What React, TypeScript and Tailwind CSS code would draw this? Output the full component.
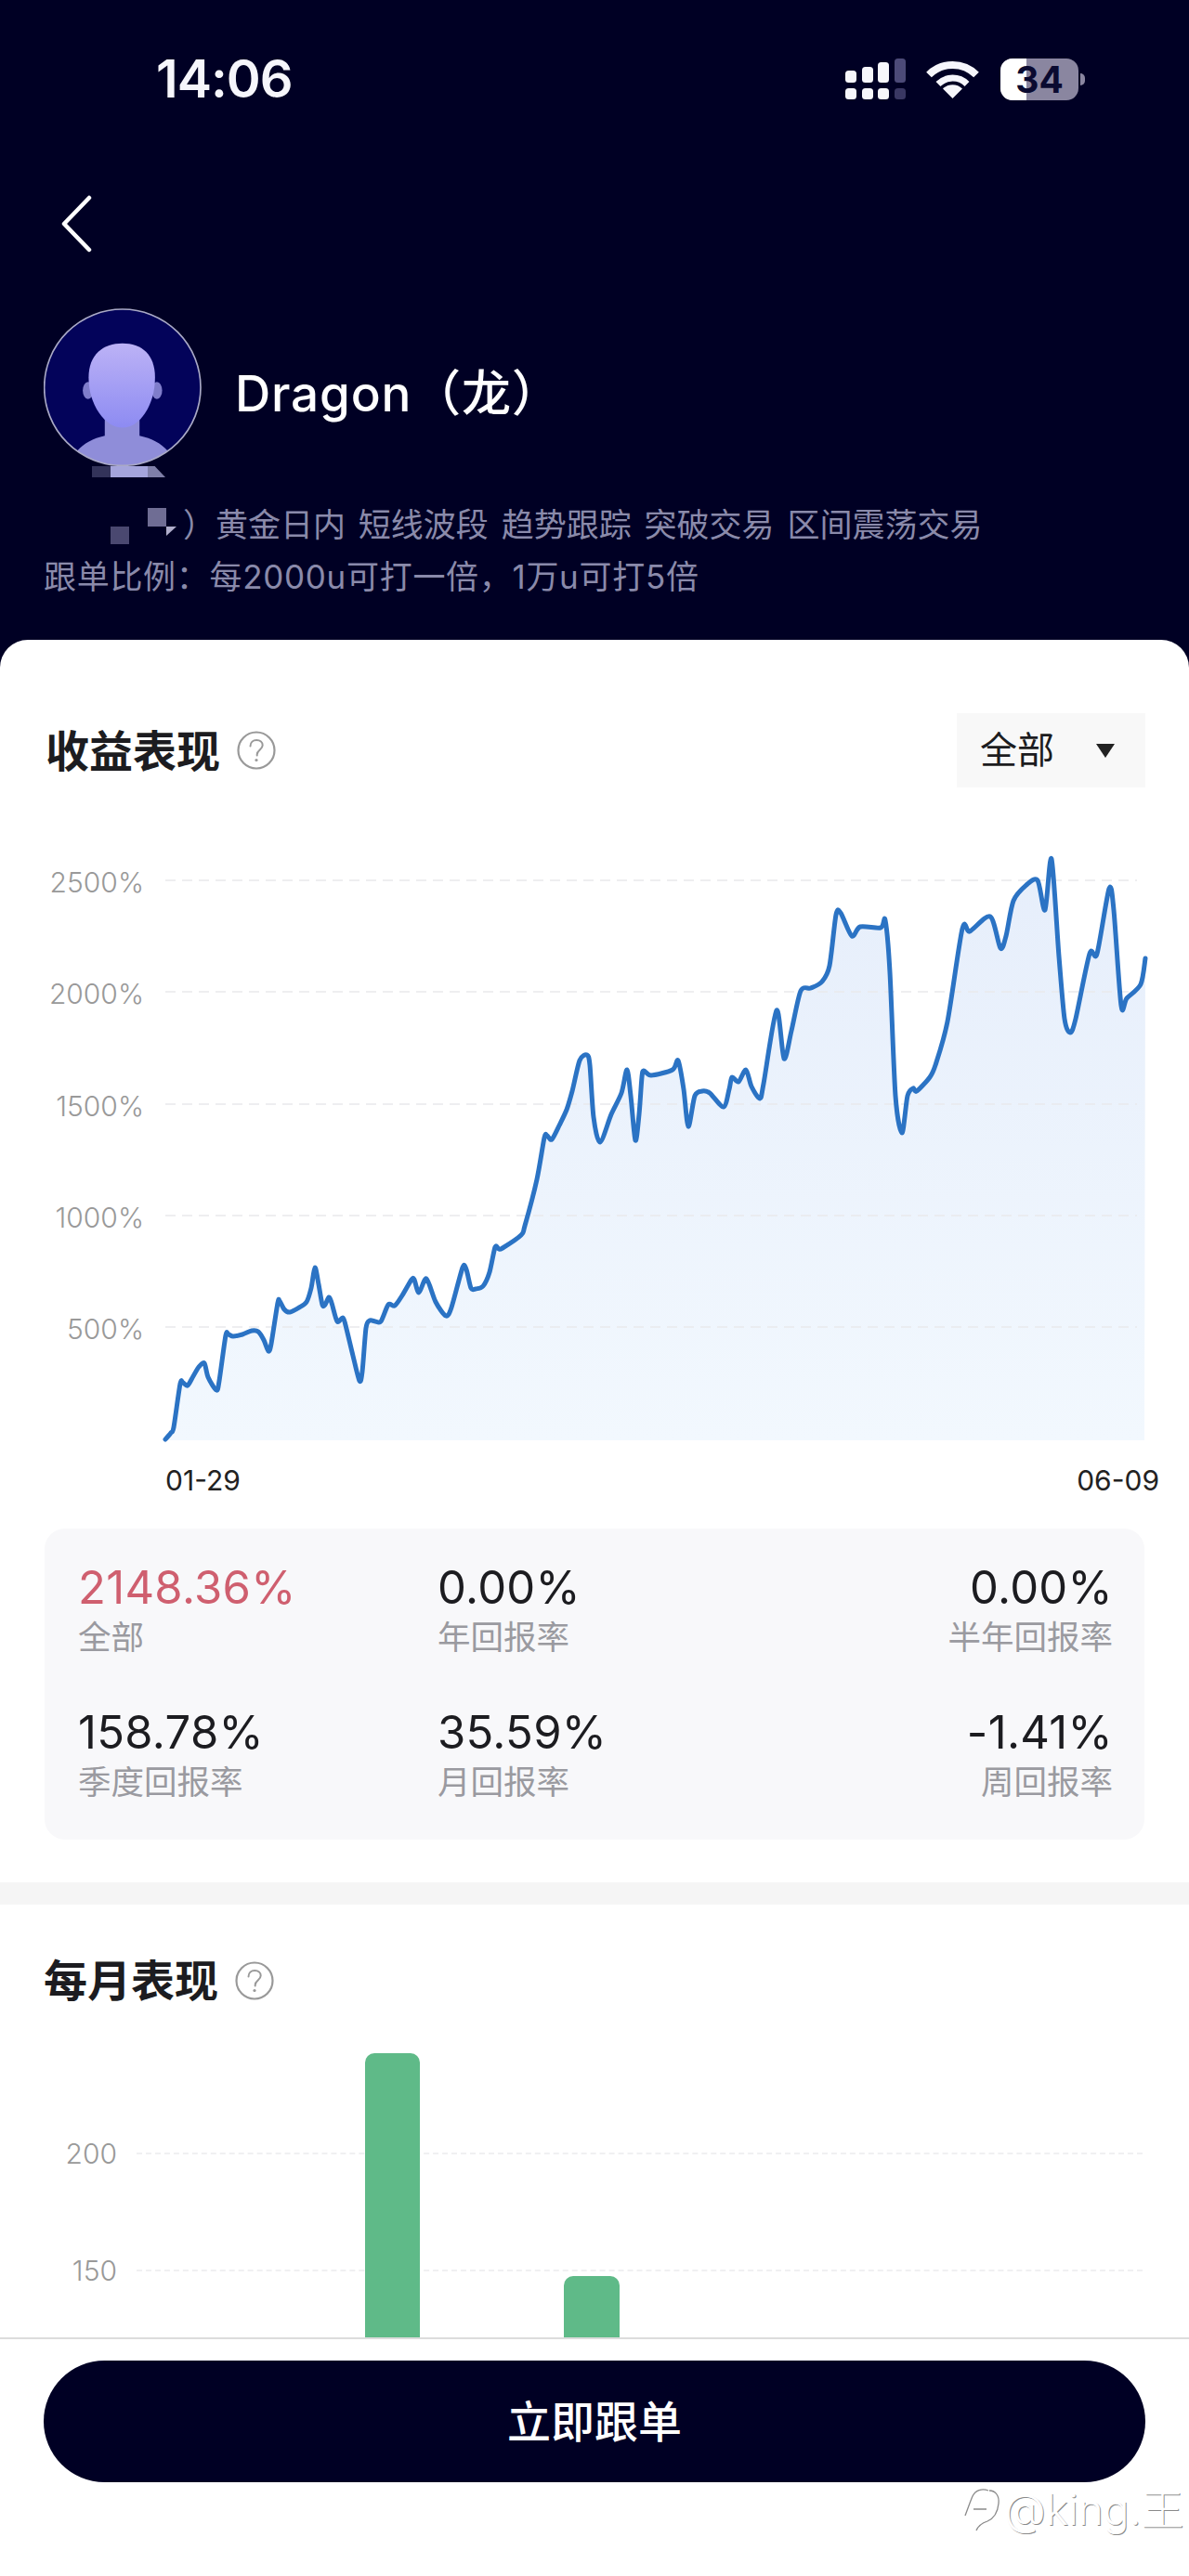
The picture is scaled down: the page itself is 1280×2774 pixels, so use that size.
import React from "react";

const SANS = "font-['Inter','Noto_Sans_CJK_SC',sans-serif]";

// plot box in page px: x 178..1232, y 930..1552
const PLOT = { x: 178, y: 930, w: 1054, h: 622 };
const GRID_Y = [948, 1068, 1189, 1309, 1429];

const CURVE: [number, number][] = [
  [178, 1550], [184, 1543], [187, 1537], [194, 1490], [197, 1489], [202, 1492], [208, 1482], [214, 1472],
  [220, 1468], [224, 1483], [233, 1497], [236, 1487], [243, 1438], [246, 1437], [251, 1439], [261, 1437],
  [271, 1433], [278, 1434], [284, 1443], [289, 1455], [292, 1447], [299, 1403], [301, 1401], [306, 1410],
  [312, 1413], [322, 1408], [330, 1402], [335, 1387], [339, 1365], [343, 1383], [347, 1405], [350, 1405],
  [354, 1397], [357, 1403], [363, 1423], [369, 1419], [372, 1427], [380, 1460], [387, 1487], [390, 1477],
  [394, 1430], [398, 1422], [404, 1423], [410, 1423], [418, 1405], [425, 1406], [433, 1395], [443, 1378],
  [446, 1378], [451, 1392], [459, 1377], [469, 1402], [480, 1417], [486, 1408], [498, 1365], [502, 1367],
  [507, 1387], [512, 1388], [520, 1385], [527, 1370], [533, 1343], [537, 1345], [541, 1344], [561, 1330],
  [565, 1320], [578, 1270], [586, 1225], [589, 1223], [594, 1227], [602, 1212], [610, 1195], [616, 1175],
  [624, 1142], [632, 1136], [635, 1147], [639, 1203], [646, 1230], [658, 1200], [669, 1177], [675, 1152],
  [679, 1180], [684, 1228], [688, 1200], [691, 1160], [693, 1153], [701, 1158], [724, 1152], [730, 1142],
  [736, 1173], [741, 1213], [748, 1180], [756, 1175], [764, 1177], [779, 1192], [785, 1173], [788, 1160],
  [795, 1165], [803, 1152], [809, 1170], [818, 1183], [822, 1167], [836, 1088], [844, 1140], [852, 1110],
  [862, 1067], [873, 1064], [885, 1057], [893, 1040], [900, 985], [905, 983], [917, 1008], [926, 998],
  [948, 999], [953, 991], [958, 1047], [964, 1180], [971, 1220], [977, 1180], [983, 1172], [987, 1175],
  [1001, 1160], [1007, 1147], [1020, 1100], [1036, 1000], [1044, 1003], [1066, 987], [1077, 1021], [1083, 1008],
  [1091, 970], [1105, 953], [1117, 948], [1125, 980], [1132, 925], [1140, 1030], [1146, 1097], [1152, 1112],
  [1158, 1097], [1173, 1027], [1181, 1027], [1194, 957], [1199, 980], [1207, 1083], [1213, 1075], [1228, 1060],
  [1233, 1032],
];

// catmull-rom through the traced points, so the peaks stay soft
function smoothPath(points: [number, number][]) {
  const tension = 0.14;
  let d = `M${points[0][0]} ${points[0][1]}`;
  for (let i = 0; i < points.length - 1; i++) {
    const p0 = points[Math.max(i - 1, 0)];
    const p1 = points[i];
    const p2 = points[i + 1];
    const p3 = points[Math.min(i + 2, points.length - 1)];
    const c1x = p1[0] + (p2[0] - p0[0]) * tension;
    const c1y = p1[1] + (p2[1] - p0[1]) * tension;
    const c2x = p2[0] - (p3[0] - p1[0]) * tension;
    const c2y = p2[1] - (p3[1] - p1[1]) * tension;
    d += ` C${c1x.toFixed(1)} ${c1y.toFixed(1)} ${c2x.toFixed(1)} ${c2y.toFixed(1)} ${p2[0]} ${p2[1]}`;
  }
  return d;
}

const STATS = [
  { value: "2148.36%", label: "全部", accent: true },
  { value: "0.00%", label: "年回报率" },
  { value: "0.00%", label: "半年回报率", right: true },
  { value: "158.78%", label: "季度回报率" },
  { value: "35.59%", label: "月回报率" },
  { value: "-1.41%", label: "周回报率", right: true },
];

function HelpIcon() {
  return (
    <svg width="42" height="42" viewBox="0 0 42 42" fill="none" className="shrink-0">
      <circle cx="21" cy="21" r="19.5" stroke="#999" strokeWidth="2.2" />
      <path
        d="M14.5 16.5c0-4 3-6.5 6.7-6.5 3.8 0 6.5 2.4 6.5 5.6 0 4.6-6 5.2-6 9.8v1"
        stroke="#999"
        strokeWidth="2"
        strokeLinecap="round"
      />
      <circle cx="21" cy="31.5" r="1.6" fill="#999" />
    </svg>
  );
}

function SignalIcon() {
  const bars = [
    { x: 0, top: 13, fill: "#f6f6fb" },
    { x: 18, top: 9, fill: "#f6f6fb" },
    { x: 35, top: 4, fill: "#f6f6fb" },
    { x: 53, top: 0, fill: "#4c4a78" },
  ];
  return (
    <svg width="65" height="45" viewBox="0 0 65 45">
      {bars.map((b) => (
        <g key={b.x} fill={b.fill}>
          <rect x={b.x} y={b.top} width="12" height={26 - b.top} rx="3.5" />
          <rect x={b.x} y="32" width="12" height="12" rx="3.5" opacity={b.x === 53 ? 0.75 : 1} />
        </g>
      ))}
    </svg>
  );
}

function WifiIcon() {
  return (
    <svg width="57" height="41" viewBox="0 0 57 41" fill="none">
      <path d="M3 15.5a36 36 0 0 1 51 0" stroke="#f6f6fb" strokeWidth="8" />
      <path d="M13 25.5a22 22 0 0 1 31 0" stroke="#f6f6fb" strokeWidth="7" />
      <path d="M28.5 41L18 30.5a15 15 0 0 1 21 0Z" fill="#f6f6fb" />
    </svg>
  );
}

function Battery() {
  return (
    <div className="flex items-center gap-[2px]">
      <div className="relative h-[45px] w-[84px] overflow-hidden rounded-[13px] bg-[#8a86a0]">
        <div className="h-full w-[28px] bg-white" />
        <span className="absolute inset-0 flex items-center justify-center font-['Inter',sans-serif] text-[39px] font-bold leading-none text-[#0a0a30]">
          34
        </span>
      </div>
      <div className="h-[13px] w-[5px] rounded-r-full bg-[#8a86a0]" />
    </div>
  );
}

function Avatar() {
  return (
    <svg width="170" height="170" viewBox="84 67 507 509" className="shrink-0">
      <defs>
        <linearGradient id="face" x1="0" y1="0" x2="0" y2="1">
          <stop offset="0" stopColor="#bcb2f6" />
          <stop offset="1" stopColor="#8d8bf2" />
        </linearGradient>
        <clipPath id="avatarClip">
          <circle cx="337" cy="322" r="252" />
        </clipPath>
      </defs>
      <circle cx="337" cy="322" r="252" fill="#03035a" />
      <g clipPath="url(#avatarClip)">
        <ellipse cx="226" cy="332" rx="17" ry="28" fill="#7f7dcb" />
        <ellipse cx="448" cy="332" rx="17" ry="28" fill="#7f7dcb" />
        <path d="M280 410h112v68c40 8 70 25 90 48v60H192v-60c20-23 50-40 88-48Z" fill="#8f8dd9" />
        <path
          d="M337 180c62 0 105 36 105 110 0 90-50 162-105 162s-109-72-109-162c0-74 47-110 109-110Z"
          fill="url(#face)"
        />
      </g>
      <circle cx="337" cy="322" r="252" fill="none" stroke="#a9a9c6" strokeWidth="5" />
    </svg>
  );
}

function ReturnChart() {
  const line = smoothPath(CURVE);
  const area = `${line} L1232 1551 L178 1551 Z`;
  return (
    <div className="mt-[82px] h-[622px] w-full">
      <div className="flex h-[622px]">
        <div className="relative w-[155px] shrink-0 text-right text-[30px] font-light leading-none text-[#999]">
          {["2500%", "2000%", "1500%", "1000%", "500%"].map((label, i) => (
            <span key={label} className="absolute right-0" style={{ top: GRID_Y[i] - PLOT.y - 13 }}>
              {label}
            </span>
          ))}
        </div>
        <svg
          width={PLOT.w}
          height={PLOT.h}
          viewBox={`${PLOT.x} ${PLOT.y} ${PLOT.w} ${PLOT.h}`}
          className="ml-[23px] shrink-0 overflow-visible"
        >
          <defs>
            <linearGradient id="areaFill" x1="0" y1="0" x2="0" y2="1">
              <stop offset="0" stopColor="#e6eefb" />
              <stop offset="1" stopColor="#f2f8fe" />
            </linearGradient>
          </defs>
          <path d={area} fill="url(#areaFill)" />
          {GRID_Y.map((y) => (
            <line key={y} x1="178" x2="1224" y1={y} y2={y} stroke="#e9e9ec" strokeWidth="1.5" strokeDasharray="11 7" />
          ))}
          <path d={line} fill="none" stroke="#2b73c4" strokeWidth="5" strokeLinejoin="round" strokeLinecap="round" />
        </svg>
      </div>
    </div>
  );
}

function StatCell({ value, label, accent, right }: { value: string; label: string; accent?: boolean; right?: boolean }) {
  return (
    <div className={right ? "text-right" : ""}>
      <div className={`h-[48px] text-[49px] leading-[48px] tracking-[0.3px] ${accent ? "text-[#cf5f6f]" : "text-[#1c1c20]"}`}>{value}</div>
      <div className="mt-[8px] text-[35.5px] leading-[44px] text-[#9a9aa0]">{label}</div>
    </div>
  );
}

export default function App() {
  return (
    <div className={`flex h-[2774px] w-[1280px] flex-col overflow-hidden bg-[#000024] ${SANS}`}>
      {/* header */}
      <div className="h-[689px] shrink-0 px-[47px] pt-[60px]">
        <div className="flex h-[50px] items-center justify-between pl-[121px] pr-[65px]">
          <span className="text-[56px] font-semibold leading-none tracking-[-1px] text-[#f6f6fb]">14:06</span>
          <div className="flex items-center">
            <SignalIcon />
            <div className="ml-[22px]">
              <WifiIcon />
            </div>
            <div className="ml-[23px]">
              <Battery />
            </div>
          </div>
        </div>

        <svg width="36" height="62" viewBox="0 0 36 62" fill="none" className="ml-[17px] mt-[100px]">
          <path d="M32 3L5 31l27 28" stroke="#fff" strokeWidth="4.5" strokeLinecap="round" strokeLinejoin="round" />
        </svg>

        <div className="mt-[60px] flex items-center gap-[36px]">
          <Avatar />
          <span className="whitespace-nowrap pt-[14px] text-[53px] font-medium leading-none tracking-[0.8px] text-white">Dragon（龙）</span>
        </div>
        <div className="ml-[52px] flex h-[12px]">
          <div className="w-[20px] bg-[#33335a]" />
          <div className="w-[40px] bg-[#a5a5dc]" />
          <div className="w-[19px] bg-[#7f7fa8] [clip-path:polygon(0_0,40%_0,100%_100%,0_100%)]" />
        </div>

        <div className="relative mt-[23px] h-[56px] whitespace-nowrap pl-[150px] text-[35px] leading-[56px] text-[#8a8aaa] [word-spacing:4px]">
          <span className="absolute left-[112px] top-[10px] h-[20px] w-[20px] bg-[#6f6d94]" />
          <span className="absolute left-[72px] top-[30px] h-[19px] w-[20px] bg-[#4a4870]" />
          <span className="absolute left-[132px] top-[30px] h-[10px] w-[11px] bg-[#b0aecc] [clip-path:polygon(0_0,100%_0,0_100%)]" />
          ）黄金日内 短线波段 趋势跟踪 突破交易 区间震荡交易
        </div>
        <div className="text-[35px] leading-[56px] tracking-[0.7px] text-[#8a8aaa]">跟单比例：每2000u可打一倍，1万u可打5倍</div>
      </div>

      {/* scroll content */}
      <div className="relative min-h-0 flex-1 overflow-hidden rounded-t-[30px] bg-white">
        <section className="px-[47px] pt-[79px]">
          <div className="flex h-[80px] items-center justify-between">
            <div className="flex items-center gap-[18px] pl-[2px]">
              <h2 className="text-[47px] font-semibold leading-none text-[#1c1c20]">收益表现</h2>
              <HelpIcon />
            </div>
            <div className="flex h-[80px] w-[203px] items-center justify-between bg-[#f8f8f8] pl-[25px] pr-[33px]">
              <span className="text-[40px] leading-none text-[#1c1c20]">全部</span>
              <span className="h-0 w-0 border-x-[10px] border-t-[15px] border-x-transparent border-t-[#222]" />
            </div>
          </div>
        </section>

        <div className="px-0 pr-[48px]">
          <ReturnChart />
        </div>

        <div className="mt-[24px] flex justify-between pl-[178px] pr-[32px] text-[30px] leading-[36px] text-[#222]">
          <span>01-29</span>
          <span>06-09</span>
        </div>

        <div className="mx-[48px] mt-[34px] grid h-[335px] grid-cols-[387px_1fr_auto] gap-y-[16px] rounded-[22px] bg-[#f8f8fa] pl-[36px] pr-[34px] pt-[40px]">
          {STATS.map((s) => (
            <StatCell key={s.label} {...s} />
          ))}
        </div>

        <div className="mt-[46px] h-[24px] bg-[#f5f5f5]" />

        <section className="px-[47px] pt-[58px]">
          <div className="flex items-center gap-[18px]">
            <h2 className="text-[47px] font-semibold leading-none text-[#1c1c20]">每月表现</h2>
            <HelpIcon />
          </div>
        </section>

        {/* bars run under the footer */}
        <div className="relative mt-[55px] h-[313px]">
          {[
            { label: "200", top: 108 },
            { label: "150", top: 234 },
          ].map((tick) => (
            <div key={tick.label} className="absolute left-0 right-[50px] flex items-center" style={{ top: tick.top - 18 }}>
              <span className="w-[126px] text-right text-[30px] font-light leading-[36px] text-[#999]">{tick.label}</span>
              <span className="ml-[21px] flex-1 border-t-2 border-dashed border-[#f0f0f2]" />
            </div>
          ))}
          <div className="absolute bottom-0 left-[393px] h-[313px] w-[59px] rounded-t-[10px] bg-[#5fba88]" />
          <div className="absolute bottom-0 left-[607px] h-[73px] w-[60px] rounded-t-[10px] bg-[#5fba88]" />
        </div>
      </div>

      {/* footer */}
      <div className="relative h-[257px] shrink-0 border-t-2 border-[#dcdcdc] bg-white px-[47px] pt-[23px]">
        <button className="flex h-[131px] w-full items-center justify-center rounded-[66px] bg-[#000024] text-[47px] font-medium leading-none text-white">
          立即跟单
        </button>
        <div className="absolute left-[1034px] top-[158px] flex items-center gap-[1px] whitespace-nowrap text-white">
          <svg width="46" height="50" viewBox="0 0 46 50" fill="none" stroke="#8a8a8a" strokeWidth="1.3">
            <path d="M30 5c-7-3-14 0-17 6-3 7-6 16-8 21M14 25h14" />
            <path d="M31 5c7 0 11 6 10 14-1 10-5 16-12 19-6 2-10 5-12 10" />
          </svg>
          <span className="text-[46px] font-light leading-none [text-shadow:1px_1px_0_#8a8a8a]">@king.王</span>
        </div>
      </div>
    </div>
  );
}
